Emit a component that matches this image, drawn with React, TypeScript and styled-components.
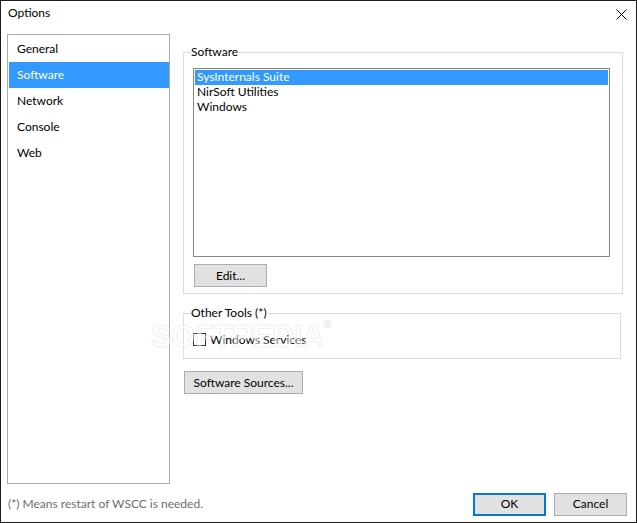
import styled, { createGlobalStyle } from 'styled-components';

const GlobalStyle = createGlobalStyle`
  html, body {
    margin: 0;
    padding: 0;
    background: #ffffff;
  }
  * {
    box-sizing: border-box;
  }
`;

const categories = ['General', 'Software', 'Network', 'Console', 'Web'];
const software = ['SysInternals Suite', 'NirSoft Utilities', 'Windows'];

const OptionsDialog = () => {
  return (
    <Window>
      <TitleBar>
        <Title>Options</Title>
        <CloseButton aria-label="Close">
          <svg width="11" height="11" viewBox="0 0 11 11">
            <path d="M0.5 0.5 L10.5 10.5 M10.5 0.5 L0.5 10.5" stroke="#000" strokeWidth="1" />
          </svg>
        </CloseButton>
      </TitleBar>

      <Body>
        <CategoryList>
          {categories.map((c) => (
            <CategoryItem key={c} $selected={c === 'Software'}>
              {c}
            </CategoryItem>
          ))}
        </CategoryList>

        <Panel>
          <GroupBox>
            <Legend>Software</Legend>
            <ListBox>
              {software.map((s, i) => (
                <ListItem key={s} $selected={i === 0}>
                  {s}
                </ListItem>
              ))}
            </ListBox>
            <Button $width={73} $left={10} $top={7}>
              Edit...
            </Button>
          </GroupBox>

          <GroupBox $narrow>
            <Legend>Other Tools (*)</Legend>
            <CheckRow>
              <CheckBox />
              <span>Windows Services</span>
            </CheckRow>
          </GroupBox>

          <Button $width={119} $left={1} $top={12}>
            Software Sources...
          </Button>
        </Panel>
      </Body>

      <Footer>
        <Note>(*) Means restart of WSCC is needed.</Note>
        <ButtonRow>
          <Button $width={73} $default>
            OK
          </Button>
          <Button $width={73}>Cancel</Button>
        </ButtonRow>
      </Footer>

      {/* faint site watermark that sits over the dialog */}
      <Watermark aria-hidden>
        SOFTPEDIA<sup>®</sup>
      </Watermark>
    </Window>
  );
};

export default function App() {
  return (
    <>
      <GlobalStyle />
      <OptionsDialog />
    </>
  );
}

const Window = styled.div`
  position: relative;
  width: 637px;
  height: 523px;
  display: flex;
  flex-direction: column;
  border: 1px solid #1c1c1c;
  background: #ffffff;
  font-family: 'Segoe UI', Lato, 'Noto Sans', sans-serif;
  font-size: 12px;
  color: #000000;
  overflow: hidden;
`;

const TitleBar = styled.div`
  height: 26px;
  display: flex;
  align-items: center;
  justify-content: space-between;
  padding-left: 7px;
`;

const Title = styled.div`
  font-size: 12px;
  line-height: 16px;
  padding-bottom: 2px;
`;

const CloseButton = styled.div`
  width: 30px;
  height: 26px;
  display: flex;
  align-items: center;
  justify-content: center;
`;

const Body = styled.div`
  display: flex;
  gap: 13px;
  padding: 7px 0 0 6px;
  height: 483px;
`;

const CategoryList = styled.div`
  width: 163px;
  height: 450px;
  border: 1px solid #acacac;
  padding: 1px 0 1px 1px;
  display: flex;
  flex-direction: column;
`;

const CategoryItem = styled.div<{ $selected?: boolean }>`
  height: 26px;
  display: flex;
  align-items: center;
  padding: 0 0 2px 8px;
  background: ${(p) => (p.$selected ? '#3399ff' : 'transparent')};
  color: ${(p) => (p.$selected ? '#ffffff' : '#000000')};
`;

const Panel = styled.div`
  display: flex;
  flex-direction: column;
  align-items: flex-start;
`;

const GroupBox = styled.fieldset<{ $narrow?: boolean }>`
  width: ${(p) => (p.$narrow ? 438 : 440)}px;
  margin: ${(p) => (p.$narrow ? '11px' : '10px')} 0 0 0;
  padding: 0 0 ${(p) => (p.$narrow ? 11 : 6)}px 0;
  border: 1px solid #dcdcdc;
  display: flex;
  flex-direction: column;
  align-items: flex-start;
  min-width: 0;
`;

const Legend = styled.legend`
  margin-left: 7px;
  padding: 0 1px 0 0;
  line-height: 16px;
  font-size: 12px;
`;

const ListBox = styled.div`
  margin: 8px 0 0 9px;
  width: 417px;
  height: 189px;
  border: 1px solid #828790;
  padding: 1px;
  display: flex;
  flex-direction: column;
`;

const ListItem = styled.div<{ $selected?: boolean }>`
  height: 15px;
  line-height: 14px;
  padding-left: 2px;
  background: ${(p) => (p.$selected ? '#3399ff' : 'transparent')};
  color: ${(p) => (p.$selected ? '#ffffff' : '#000000')};
`;

const Button = styled.button<{ $width: number; $left?: number; $top?: number; $default?: boolean }>`
  width: ${(p) => p.$width}px;
  height: 23px;
  margin: ${(p) => p.$top ?? 0}px 0 0 ${(p) => p.$left ?? 0}px;
  padding: 0 0 1px 0;
  background: #e1e1e1;
  border: ${(p) => (p.$default ? '2px solid #0078d7' : '1px solid #adadad')};
  font-family: inherit;
  font-size: 12px;
  color: #000000;
  display: flex;
  align-items: center;
  justify-content: center;
`;

const CheckRow = styled.div`
  margin: 11px 0 0 9px;
  display: flex;
  align-items: center;
  gap: 4px;
  height: 15px;
`;

const CheckBox = styled.span`
  width: 13px;
  height: 13px;
  border: 1px solid #333333;
  background: #ffffff;
`;

const Footer = styled.div`
  height: 38px;
  display: flex;
  align-items: center;
  justify-content: space-between;
  padding: 1px 9px 0 7px;
`;

const Note = styled.div`
  color: #6d6d6d;
  font-size: 12px;
  padding-bottom: 2px;
`;

const ButtonRow = styled.div`
  display: flex;
  gap: 8px;
`;

const Watermark = styled.div`
  position: absolute;
  left: 150px;
  top: 318px;
  font-family: 'Liberation Sans', sans-serif;
  font-weight: 700;
  font-size: 31px;
  letter-spacing: -0.5px;
  color: rgba(255, 255, 255, 0.5);
  -webkit-text-stroke: 1px rgba(200, 200, 200, 0.3);
  pointer-events: none;

  sup {
    font-size: 10px;
    vertical-align: top;
    font-weight: 400;
  }
`;
